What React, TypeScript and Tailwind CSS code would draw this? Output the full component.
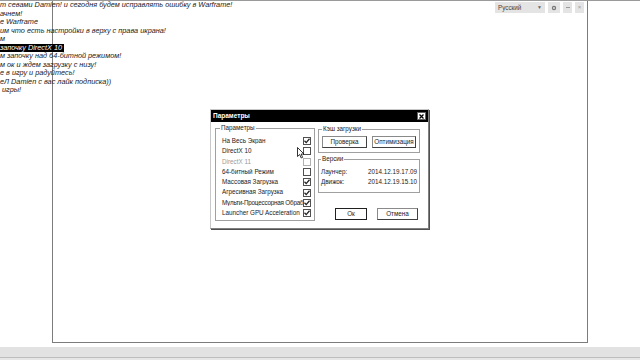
import React from "react";

const lines: { t: string; hl?: boolean }[] = [
  { t: "т севами Damien! и сегодня будем исправлять ошибку в Warframe!" },
  { t: "ачнем!" },
  { t: "е Warframe" },
  { t: "им что есть настройки в верху с права икрана!" },
  { t: "м" },
  { t: "започку DirectX 10", hl: true },
  { t: "м започку над 64-битной режимом!" },
  { t: "м ок и ждем загрузку с низу!" },
  { t: "е в игру и радуйтесь!" },
  { t: "еЛ Damien с вас лайк подписка))" },
  { t: " игры!" },
];

function Check({ checked, disabled }: { checked?: boolean; disabled?: boolean }) {
  return (
    <div
      className={`relative shrink-0 w-[8px] h-[8px] border ${disabled ? "border-[#b0b0b0]" : "border-[#505050]"} bg-white flex items-center justify-center`}
    >
      {checked && (
        <svg width="6" height="6" viewBox="0 0 6 6">
          <path d="M0.5 2.8 L2.2 4.6 L5.5 0.8" stroke="#222" strokeWidth="1.3" fill="none" />
        </svg>
      )}
    </div>
  );
}

function Row({ label, checked, disabled, tight }: { label: string; checked?: boolean; disabled?: boolean; tight?: boolean }) {
  return (
    <div className="h-[10.3px] flex items-center">
      <span
        className={`flex-1 min-w-0 overflow-hidden text-[6.3px] leading-none whitespace-nowrap ${tight ? "tracking-[-0.2px]" : ""} ${disabled ? "text-[#9a9a9a]" : "text-[#222]"}`}
      >
        {label}
      </span>
      <Check checked={checked} disabled={disabled} />
    </div>
  );
}

function Btn({ label, w, def }: { label: string; w: string; def?: boolean }) {
  return (
    <div
      className={`${w} h-[12px] bg-white flex items-center justify-center text-[6.3px] leading-none text-[#222] border ${def ? "border-[#202020]" : "border-[#8a8a8a] border-r-[#404040] border-b-[#404040]"}`}
    >
      {label}
    </div>
  );
}

export default function App() {
  return (
    <div
      className="w-[640px] h-[360px] relative bg-white overflow-hidden"
      style={{ fontFamily: '"Liberation Sans", Arial, sans-serif' }}
    >
      <div className="h-[1px] bg-[#9a9a9a]" />
      <div className="ml-[52px] w-[536px] h-[342px] border-l border-r border-b border-[#7c7c7c] flex flex-col">
        <div className="flex justify-end items-start gap-[3px] pr-[3px] pt-[1px]">
          <div className="w-[50px] h-[11px] bg-[#e4e4e4] flex items-center justify-between px-[3px] text-[6.3px] text-[#444]">
            <span>Русский</span>
            <span className="text-[5px] text-[#666]">▼</span>
          </div>
          <div className="w-[12px] h-[11px] bg-[#e4e4e4] flex items-center justify-center">
            <svg width="6" height="6" viewBox="0 0 6 6">
              <circle cx="3" cy="3" r="2.2" fill="#777" />
              <circle cx="3" cy="3" r="0.9" fill="#e4e4e4" />
            </svg>
          </div>
          <div className="w-[9px] h-[11px] bg-[#e4e4e4] flex items-center justify-center">
            <div className="w-[4px] h-[1px] bg-[#999]" />
          </div>
          <div className="w-[9px] h-[11px] bg-[#e4e4e4] flex items-center justify-center text-[6px] text-[#999]">×</div>
        </div>
      </div>
      <div className="mt-[4px] h-[10px] bg-[#e2e2e2]" />
      <div className="h-[1px] bg-[#bdbdbd]" />
      <div className="h-[2px] bg-[#e6e6e6]" />

      {/* subtitle text overlay */}
      <div className="absolute left-0 top-[1px] flex flex-col italic text-[7.3px] leading-[8.5px] text-[#1a1a1a]">
        {lines.map((l, i) => (
          <div key={i} className="h-[8.5px] whitespace-pre flex">
            <span className={l.hl ? "bg-black text-white pr-[2px]" : ""}>{l.t}</span>
          </div>
        ))}
      </div>

      {/* dialog */}
      <div className="absolute left-[210px] top-[109px] w-[219px] h-[120px] bg-white border border-[#808080] border-t-[#c8c8c8] border-l-[#c8c8c8] shadow-[1px_1px_0_#505050]">
        <div className="h-[12px] bg-black flex items-center justify-between pl-[2px] pr-[2px]">
          <span className="text-white font-bold text-[6.5px] leading-none">Параметры</span>
          <div className="w-[9px] h-[8px] bg-white border border-[#606060] flex items-center justify-center">
            <svg width="5" height="5" viewBox="0 0 5 5">
              <path d="M0.5 0.5 L4.5 4.5 M4.5 0.5 L0.5 4.5" stroke="#000" strokeWidth="1.3" />
            </svg>
          </div>
        </div>
        <div className="flex pl-[4px] pt-[6px] gap-[3px]">
          {/* left group */}
          <div className="relative w-[100px] h-[93px] border border-[#a0a0a0] pl-[6px] pr-[3px] pt-[7px]">
            <span className="absolute left-[4px] -top-[4px] bg-white px-[1px] text-[6.3px] leading-none text-[#222]">Параметры</span>
            <Row label="На Весь Экран" checked />
            <Row label="DirectX 10" />
            <Row label="DirectX 11" disabled />
            <Row label="64-битный Режим" />
            <Row label="Массовая Загрузка" checked />
            <Row label="Агресивная Загрузка" checked />
            <Row label="Мульти-Процессорная Обработка" checked tight />
            <Row label="Launcher GPU Acceleration" checked />
          </div>
          {/* right column */}
          <div className="w-[102px] flex flex-col pt-[1px]">
            <div className="relative h-[24px] border border-[#a0a0a0] flex items-center justify-between px-[3px] pt-[2px]">
              <span className="absolute left-[3px] -top-[4px] bg-white px-[1px] text-[6.3px] leading-none text-[#222]">Кэш загрузки</span>
              <Btn label="Проверка" w="w-[45px]" />
              <Btn label="Оптимизация" w="w-[44px]" />
            </div>
            <div className="relative mt-[6px] h-[34px] border border-[#a0a0a0] pl-[2px] pt-[9px] flex flex-col gap-[4px] text-[6.3px] leading-[6px] text-[#222]">
              <span className="absolute left-[2px] -top-[4px] bg-white px-[1px] leading-none">Версии</span>
              <div className="flex">
                <span className="w-[47px]">Лаунчер:</span>
                <span>2014.12.19.17.09</span>
              </div>
              <div className="flex">
                <span className="w-[47px]">Движок:</span>
                <span>2014.12.19.15.10</span>
              </div>
            </div>
            <div className="mt-[15px] pl-[17px] flex gap-[10px]">
              <Btn label="Ок" w="w-[32px]" def />
              <Btn label="Отмена" w="w-[41px]" />
            </div>
          </div>
        </div>
      </div>

      {/* mouse cursor */}
      <svg className="absolute left-[297px] top-[147px]" width="8" height="12" viewBox="0 0 8 12">
        <path d="M0.5 0.5 L0.5 9.5 L2.7 7.5 L4.2 11 L5.6 10.4 L4.2 7 L7 7 Z" fill="#fff" stroke="#000" strokeWidth="0.8" />
      </svg>
    </div>
  );
}
